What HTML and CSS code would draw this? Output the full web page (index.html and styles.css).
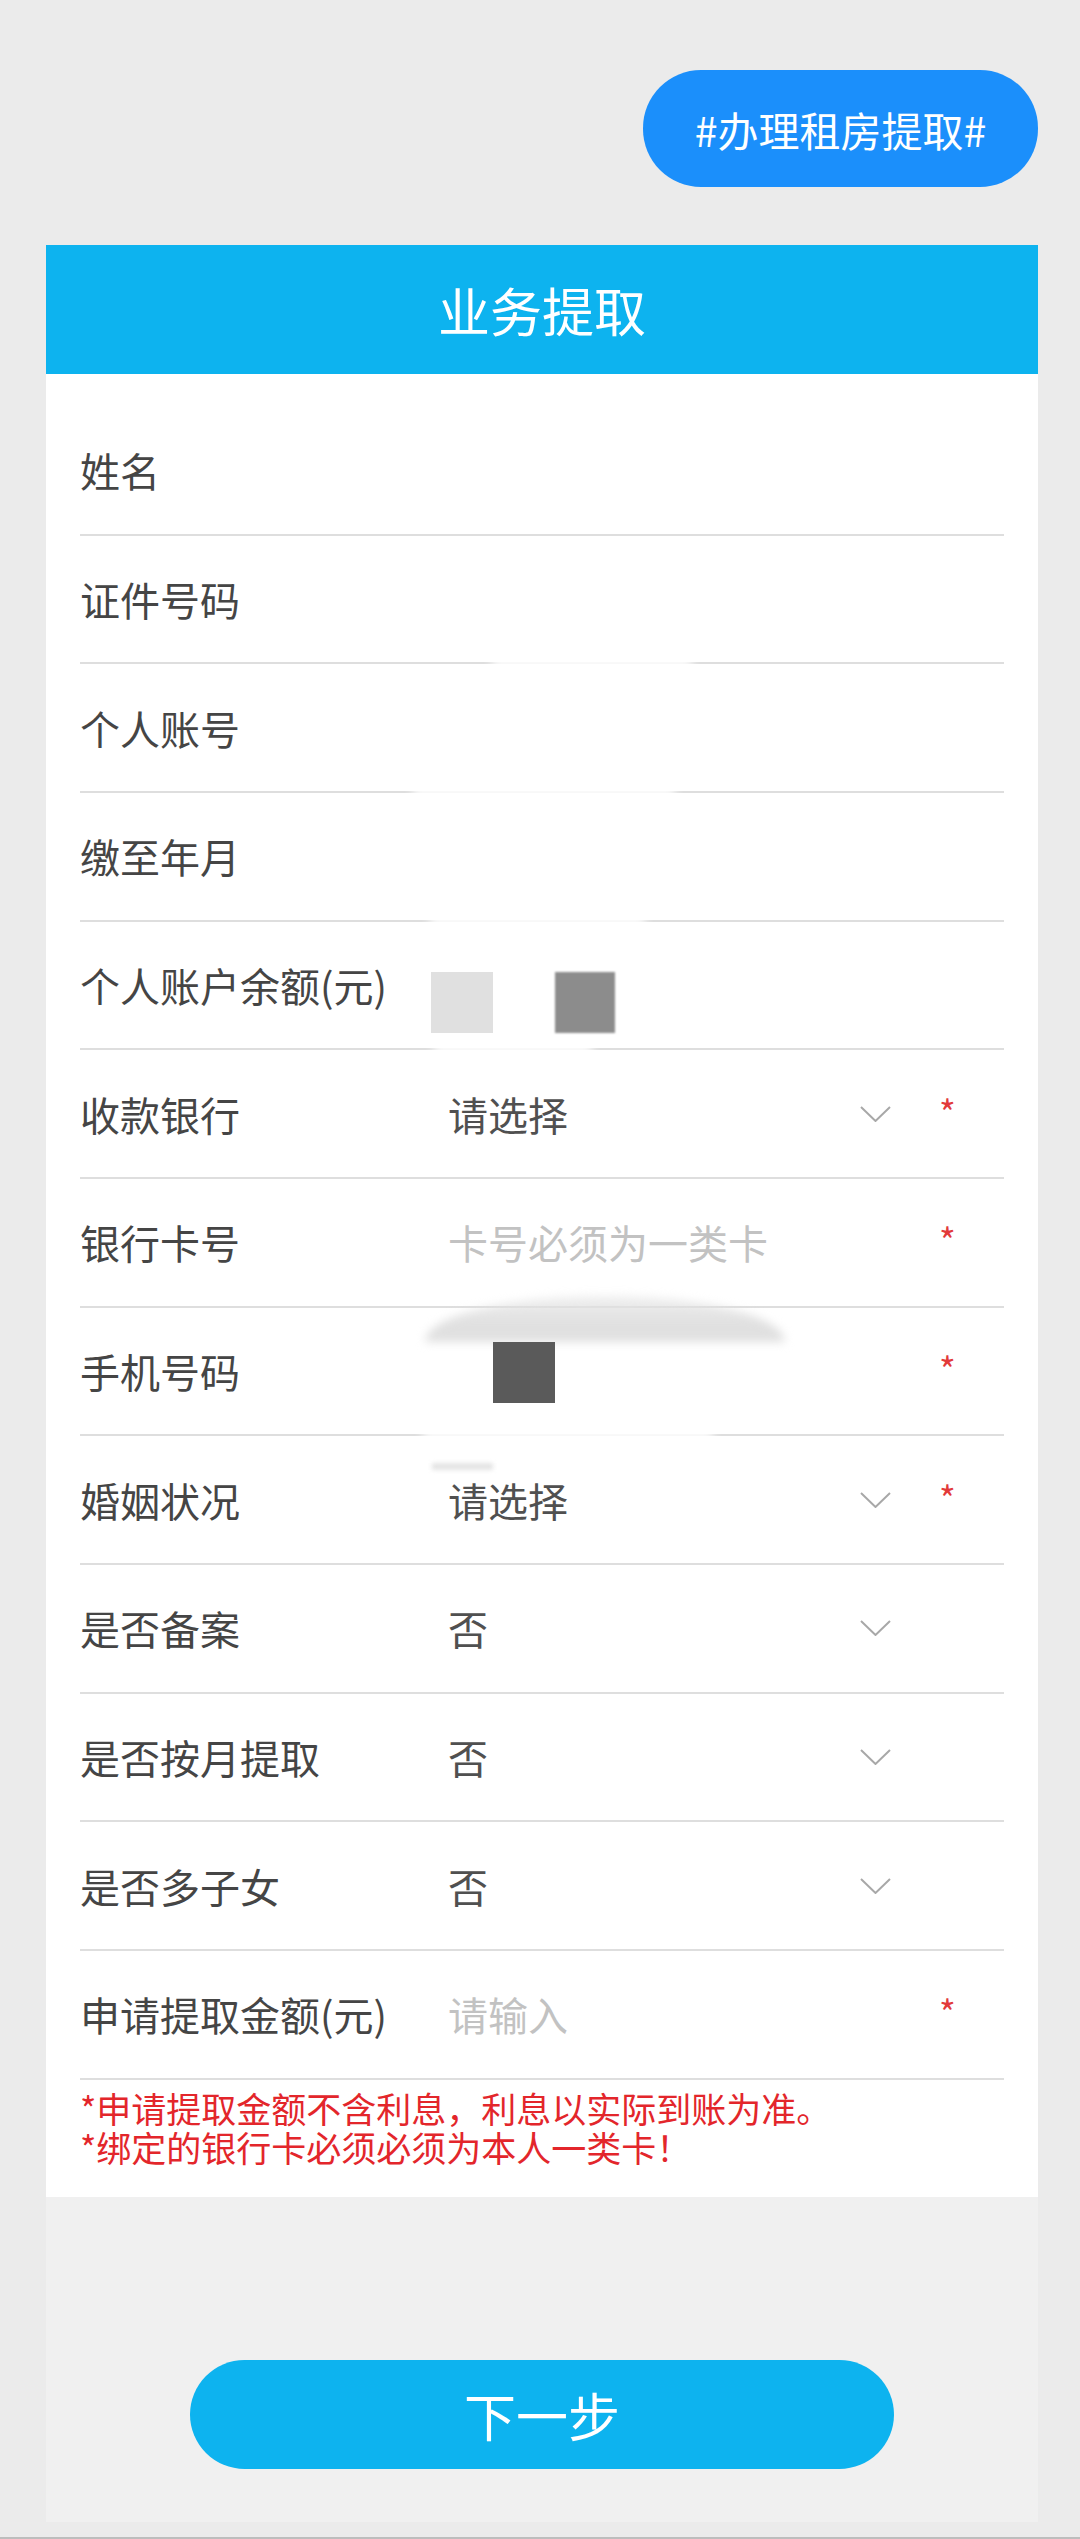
FILE: index.html
```html
<!DOCTYPE html>
<html lang="zh-CN">
<head>
<meta charset="utf-8">
<title>业务提取</title>
<link rel="stylesheet" href="styles.css">
</head>
<body>
<div class="page">
  <div class="chat">
    <div class="bubble">#办理租房提取#</div>
  </div>

  <div class="card">
    <div class="card-head">业务提取</div>
    <div class="form">
      <div class="row"><span class="label">姓名</span></div>
      <div class="row"><span class="label">证件号码</span><i class="gap g2"></i></div>
      <div class="row"><span class="label">个人账号</span><i class="gap g3"></i></div>
      <div class="row"><span class="label">缴至年月</span><i class="gap g4"></i></div>
      <div class="row"><span class="label">个人账户余额(元)</span><i class="blk blk-light"></i><i class="blk blk-mid"></i><i class="gap g5"></i></div>
      <div class="row">
        <span class="label">收款银行</span><span class="value">请选择</span>
        <svg class="chev" viewBox="0 0 31 16"><polyline points="1,1 15.5,15 30,1"/></svg>
        <span class="req">*</span>
      </div>
      <div class="row">
        <span class="label">银行卡号</span><span class="value ph">卡号必须为一类卡</span>
        <span></span>
        <span class="req">*</span>
      </div>
      <div class="row">
        <span class="label">手机号码</span><span class="value"></span>
        <span></span>
        <span class="req">*</span>
        <i class="smudge"></i><i class="blk blk-dark"></i><i class="gap g8"></i>
      </div>
      <div class="row">
        <span class="label">婚姻状况</span><span class="value">请选择</span>
        <svg class="chev" viewBox="0 0 31 16"><polyline points="1,1 15.5,15 30,1"/></svg>
        <span class="req">*</span>
        <i class="smudge-sm"></i>
      </div>
      <div class="row">
        <span class="label">是否备案</span><span class="value">否</span>
        <svg class="chev" viewBox="0 0 31 16"><polyline points="1,1 15.5,15 30,1"/></svg>
      </div>
      <div class="row">
        <span class="label">是否按月提取</span><span class="value">否</span>
        <svg class="chev" viewBox="0 0 31 16"><polyline points="1,1 15.5,15 30,1"/></svg>
      </div>
      <div class="row">
        <span class="label">是否多子女</span><span class="value">否</span>
        <svg class="chev" viewBox="0 0 31 16"><polyline points="1,1 15.5,15 30,1"/></svg>
      </div>
      <div class="row">
        <span class="label">申请提取金额(元)</span><span class="value ph">请输入</span>
        <span></span>
        <span class="req">*</span>
      </div>
      <div class="notes">
        <p>*申请提取金额不含利息，利息以实际到账为准。</p>
        <p>*绑定的银行卡必须必须为本人一类卡！</p>
      </div>
    </div>
  </div>

  <div class="footer">
    <button class="next">下一步</button>
  </div>
  <div class="bottom-strip"></div>
</div>
</body>
</html>
```

FILE: styles.css
```css
* { box-sizing: border-box; }

html, body {
  margin: 0;
  padding: 0;
  background: #ebebeb;
}

body {
  font-family: "Noto Sans CJK SC", "Noto Sans", sans-serif;
  color: #444;
}

.page {
  width: 1080px;
  height: 2539px;
  display: flex;
  flex-direction: column;
}

.chat {
  display: flex;
  justify-content: flex-end;
  padding: 70px 42px 0 0;
}

.bubble {
  width: 395px;
  height: 117px;
  border-radius: 58px;
  background: #1b8ffb;
  color: #fff;
  font-size: 41px;
  font-weight: 400;
  display: flex;
  align-items: center;
  justify-content: center;
}

.card {
  margin: 58px 42px 0 46px;
  background: #fff;
}

.card-head {
  height: 129px;
  background: #0db3ef;
  color: #fff;
  font-size: 52px;
  display: flex;
  align-items: center;
  justify-content: center;
}

.form {
  padding: 33px 34px 0 34px;
}

.row {
  position: relative;
  height: 128.67px;
  border-bottom: 2px solid #dedede;
  display: grid;
  grid-template-columns: 368px 1fr 31px 62px;
  align-items: center;
  padding-right: 51px;
  font-size: 40px;
  line-height: 1.2;
}

.label {
  color: #454545;
  white-space: nowrap;
}

.value {
  color: #505050;
}

.value.ph {
  color: #c2c2c2;
}

.chev {
  width: 31px;
  height: 16px;
  display: block;
}

.chev polyline {
  fill: none;
  stroke: #a8a8a8;
  stroke-width: 2;
}

.req {
  justify-self: end;
  width: 14px;
  color: #e23a3a;
  font-size: 36px;
  line-height: 1;
  text-align: center;
  margin-top: -6px;
}

/* redaction marks from the original screenshot */
.gap {
  position: absolute;
  bottom: -6px;
  height: 12px;
  background: #fff;
  filter: blur(5px);
}
.g2 { left: 412px; width: 200px; }
.g3 { left: 333px; width: 262px; }
.g4 { left: 350px; width: 215px; }
.g5 { left: 354px; width: 158px; }
.g8 { left: 343px; width: 290px; }

.blk {
  position: absolute;
  height: 61px;
  width: 62px;
}
.blk-light { left: 351px; top: 50px; background: #e0e0e0; }
.blk-mid { left: 475px; top: 50px; width: 60px; background: #8c8c8c; filter: blur(1px); }
.blk-dark { left: 413px; top: 34px; background: #5a5a5a; }

.smudge {
  position: absolute;
  left: 345px;
  top: -12px;
  width: 360px;
  height: 46px;
  background: linear-gradient(to bottom, rgba(224,224,224,0.5), #e0e0e0 60%);
  border-radius: 50% 50% 0 0 / 100% 100% 0 0;
  filter: blur(5px);
}

.smudge-sm {
  position: absolute;
  left: 352px;
  top: 27px;
  width: 61px;
  height: 7px;
  background: #e4e4e4;
  filter: blur(2px);
}

.notes {
  padding: 8px 0 31px;
  color: #e3262b;
  font-size: 35px;
  line-height: 39px;
}

.notes p {
  margin: 0;
}

.footer {
  margin: 0 42px 0 46px;
  height: 325px;
  background: #f0f0f0;
  display: flex;
  justify-content: center;
  padding-top: 163px;
}

.next {
  width: 704px;
  height: 109px;
  border: none;
  border-radius: 55px;
  background: #0db3ef;
  color: #fff;
  font-family: "Noto Sans CJK SC", sans-serif;
  font-size: 52px;
  padding: 0;
}

.bottom-strip {
  flex: 1;
  border-bottom: 2px solid #bdbdbd;
}
```
